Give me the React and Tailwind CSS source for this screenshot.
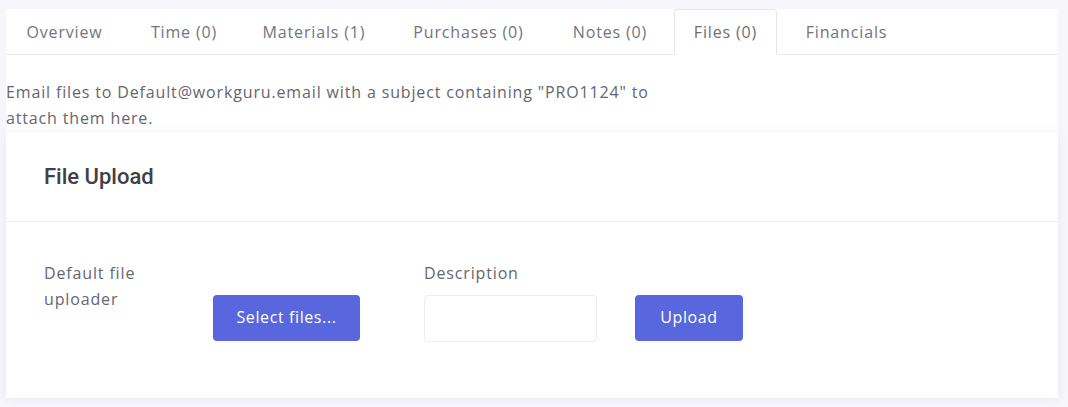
import React from "react";

const tabs = [
  { label: "Overview", w: "w-[117px]" },
  { label: "Time (0)", w: "w-[106px]" },
  { label: "Materials (1)", w: "w-[138px]" },
  { label: "Purchases (0)", w: "w-[155px]" },
  { label: "Notes (0)", w: "w-[112px]" },
  { label: "Files (0)", w: "w-[103px]", active: true },
  { label: "Financials", w: "w-[123px]" },
];

const font = { fontFamily: '"Open Sans", "Noto Sans", sans-serif' };

export default function App() {
  return (
    <div
      className="min-h-[407px] w-[1068px] bg-[#f6f6fb] pt-[9px] pl-[6px] pr-[10px] text-[#575962] tracking-[0.85px]"
      style={font}
    >
      <div className="bg-white">
        {/* tabs */}
        <div className="flex h-[46px] gap-[8px] border-b border-[#e9e9f0]">
          {tabs.map((t) => (
            <div
              key={t.label}
              className={`${t.w} flex items-center justify-center text-[16px] ${
                t.active
                  ? "-mb-px rounded-t-[4px] border border-b-white border-[#e4e4ec] bg-white text-[#6c6e78]"
                  : "text-[#72747e]"
              }`}
            >
              {t.label}
            </div>
          ))}
        </div>

        <p className="pt-[24px] pb-[1px] text-[16px] leading-[26px] text-[#646670]">
          Email files to Default@workguru.email with a subject containing "PRO1124" to
          <br />
          attach them here.
        </p>
      </div>

      {/* upload card */}
      <div className="bg-white shadow-[0_1px_10px_rgba(82,63,205,0.08)]">
        <div className="flex h-[90px] items-center border-b border-[#ebedf2] px-[38px]">
          <h3
            className="text-[22px] font-medium tracking-normal text-[#3f4047]"
            style={{ fontFamily: "Roboto, sans-serif" }}
          >
            File Upload
          </h3>
        </div>

        <div className="flex items-start px-[38px] pt-[38px] pb-[56px]">
          <div className="w-[169px] text-[16px] leading-[26px] text-[#646670]">
            Default file
            <br />
            uploader
          </div>
          <div className="w-[211px] pt-[35px]">
            <button className="h-[46px] w-[147px] rounded-[4px] bg-[#5867dd] pb-[2px] text-[16px] font-medium tracking-[0.6px] text-white">
              Select files...
            </button>
          </div>
          <div className="w-[211px]">
            <div className="text-[16px] leading-[26px] text-[#646670]">Description</div>
            <input className="mt-[9px] h-[47px] w-[173px] rounded-[4px] border border-[#ebedf2] bg-white outline-none" />
          </div>
          <div className="pt-[35px]">
            <button className="h-[46px] w-[108px] rounded-[4px] bg-[#5867dd] pb-[2px] text-[16px] font-medium tracking-[0.6px] text-white">
              Upload
            </button>
          </div>
        </div>
      </div>
    </div>
  );
}
